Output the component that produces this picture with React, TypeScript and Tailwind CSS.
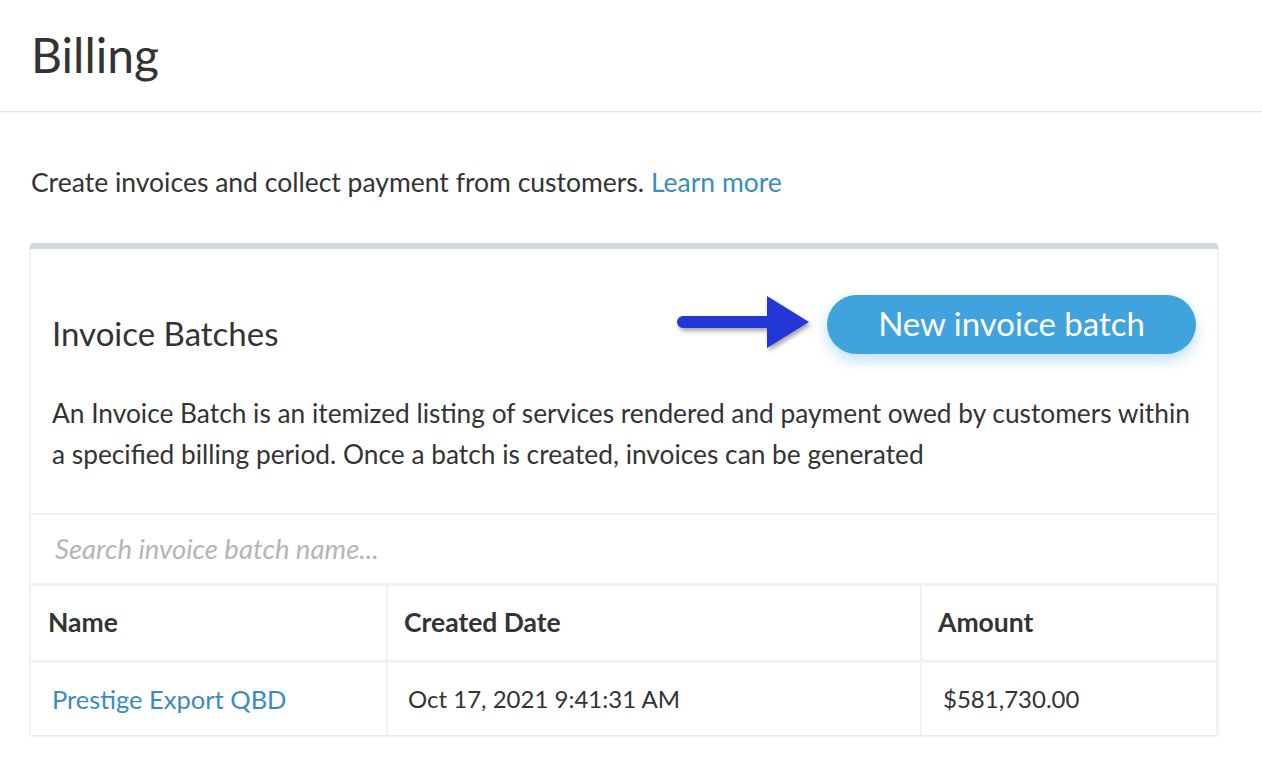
import React from "react";

const font = { fontFamily: "Lato, 'Noto Sans', sans-serif" };

const Arrow = () => (
  <svg width="140" height="60" viewBox="0 0 140 60" className="drop-shadow-[2px_3px_2px_rgba(0,0,0,0.35)]">
    <path d="M8 22 H92 V2 L134 28 L92 54 V34 H8 a6 6 0 0 1 0 -12 Z" fill="#2337d9" />
  </svg>
);

export default function App() {
  return (
    <div className="min-h-screen bg-white text-[#333]" style={font}>
      <header className="h-[112px] flex items-center px-[31px] border-b border-[#e3e3e3] shadow-[0_1px_2px_rgba(0,0,0,0.05)]">
        <h1 className="text-[48px] leading-none pb-[2px]">Billing</h1>
      </header>

      <main className="px-[30px] pt-[55px]">
        <p className="text-[26.5px] leading-[30px] pl-[1px]">
          Create invoices and collect payment from customers.{" "}
          <a className="text-[#3a8cc0]">Learn more</a>
        </p>

        <div className="mt-[46px] w-[1188px] rounded-t-[4px] border-t-[6px] border-[#d0d6de] shadow-[0_1px_3px_rgba(0,0,0,0.12)]">
          <div className="border-x border-[#f0f0f0] px-[21px] pt-[45px] pb-[38px]">
            <div className="flex items-center justify-between">
              <h2 className="text-[33px] leading-none pt-[18px]">Invoice Batches</h2>
              <div className="flex items-center gap-[12px]">
                <Arrow />
                <button className="h-[59px] w-[369px] rounded-full bg-[#40a3dd] text-white text-[33px] shadow-[0_6px_14px_rgba(64,163,221,0.35)]">
                  New invoice batch
                </button>
              </div>
            </div>
            <p className="mt-[39px] pr-[6px] text-[26.3px] leading-[41px]">
              An Invoice Batch is an itemized listing of services rendered and payment owed by customers within a specified billing period. Once a batch is created, invoices can be generated
            </p>
          </div>

          <div className="border-t-[2px] border-x border-[#f0f0f0] h-[70px] flex items-center px-[24px]">
            <input
              className="w-full outline-none text-[27.5px] italic placeholder:text-[#b5b5b5]"
              placeholder="Search invoice batch name..."
            />
          </div>

          <div className="grid grid-cols-[356px_534px_1fr] border-t-[3px] border-[#f2f2f2]">
            <div className="h-[74px] flex items-center px-[17px] text-[26.5px] font-bold border-l border-[#f0f0f0]">Name</div>
            <div className="h-[74px] flex items-center px-[16px] text-[26.5px] font-bold border-l-[2px] border-[#f0f0f0]">Created Date</div>
            <div className="h-[74px] flex items-center px-[16px] text-[26.5px] font-bold border-x-[2px] border-[#f0f0f0]">Amount</div>
            <div className="h-[75px] flex items-center px-[21px] text-[25.5px] border-t-[3px] border-l border-[#f2f2f2] text-[#3a8cc0]">Prestige Export QBD</div>
            <div className="h-[75px] flex items-center px-[20px] text-[24px] border-t-[3px] border-l-[2px] border-[#f2f2f2]">Oct 17, 2021 9:41:31 AM</div>
            <div className="h-[75px] flex items-center px-[21px] text-[24px] border-t-[3px] border-x-[2px] border-[#f2f2f2]">$581,730.00</div>
          </div>
        </div>
      </main>
    </div>
  );
}
